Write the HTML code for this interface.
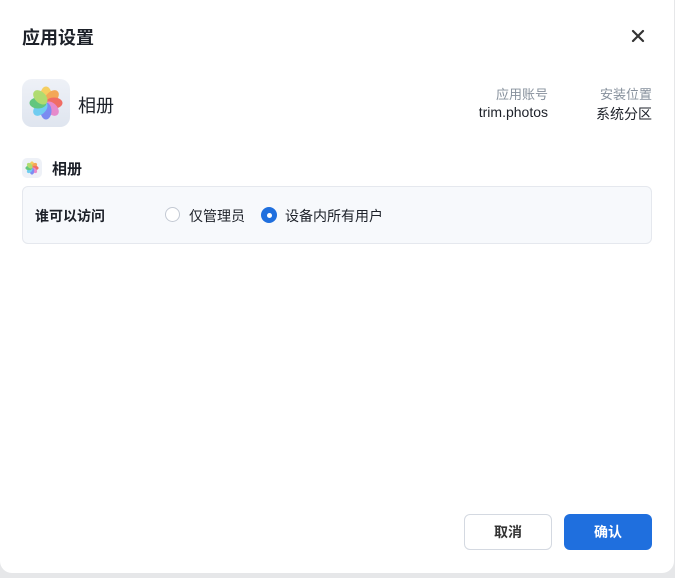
<!DOCTYPE html>
<html><head><meta charset="utf-8"><style>
body{margin:0;width:675px;height:578px;background:#e6e7e9;font-family:"Liberation Sans","Noto Sans CJK SC",sans-serif;position:relative;overflow:hidden}
.dlg{position:absolute;left:0;top:0;width:674px;height:573px;background:#fff;border-radius:0 0 12px 12px}
.t{position:absolute;white-space:nowrap}
.r{position:absolute;white-space:nowrap;text-align:right}
</style></head><body>
<div class="dlg">
<div class="t" style="left:22px;top:24px;font-size:18px;font-weight:bold;color:#1d2129">应用设置</div>
<svg class="t" style="left:631px;top:29px" width="14" height="14" viewBox="0 0 14 14"><path d="M2 2L12 12M12 2L2 12" stroke="#333" stroke-width="2.2" stroke-linecap="round"/></svg>
<div class="t" style="left:22px;top:79px;width:48px;height:48px;border-radius:10px;background:linear-gradient(#eef1f7,#dfe5ef)"></div>
<svg class="t" style="left:26px;top:83px" width="40" height="40" viewBox="-20 -20 40 40">
<g opacity="0.85">
<ellipse cx="0" cy="-8" rx="5.5" ry="8.5" fill="#f7c948"/>
<ellipse cx="0" cy="-8" rx="5.5" ry="8.5" fill="#f59b3c" transform="rotate(45)"/>
<ellipse cx="0" cy="-8" rx="5.5" ry="8.5" fill="#f2584c" transform="rotate(90)"/>
<ellipse cx="0" cy="-8" rx="5.5" ry="8.5" fill="#e77ac5" transform="rotate(135)"/>
<ellipse cx="0" cy="-8" rx="5.5" ry="8.5" fill="#6a7bf2" transform="rotate(180)"/>
<ellipse cx="0" cy="-8" rx="5.5" ry="8.5" fill="#5cc8f0" transform="rotate(225)"/>
<ellipse cx="0" cy="-8" rx="5.5" ry="8.5" fill="#4cc06a" transform="rotate(270)"/>
<ellipse cx="0" cy="-8" rx="5.5" ry="8.5" fill="#a7d95a" transform="rotate(315)"/>
</g></svg>
<div class="t" style="left:78px;top:92px;font-size:18px;color:#1d2129">相册</div>
<div class="r" style="right:126px;top:84px;font-size:13px;color:#86909c">应用账号</div>
<div class="r" style="right:126px;top:104px;font-size:14px;color:#1d2129">trim.photos</div>
<div class="r" style="right:22px;top:84px;font-size:13px;color:#86909c">安装位置</div>
<div class="r" style="right:22px;top:104px;font-size:14px;color:#1d2129">系统分区</div>
<div class="t" style="left:22px;top:158px;width:20px;height:20px;border-radius:5px;background:#eef1f7"></div>
<svg class="t" style="left:24px;top:160px" width="16" height="16" viewBox="-20 -20 40 40">
<g opacity="0.85">
<ellipse cx="0" cy="-8" rx="5.5" ry="8.5" fill="#f7c948"/>
<ellipse cx="0" cy="-8" rx="5.5" ry="8.5" fill="#f59b3c" transform="rotate(45)"/>
<ellipse cx="0" cy="-8" rx="5.5" ry="8.5" fill="#f2584c" transform="rotate(90)"/>
<ellipse cx="0" cy="-8" rx="5.5" ry="8.5" fill="#e77ac5" transform="rotate(135)"/>
<ellipse cx="0" cy="-8" rx="5.5" ry="8.5" fill="#6a7bf2" transform="rotate(180)"/>
<ellipse cx="0" cy="-8" rx="5.5" ry="8.5" fill="#5cc8f0" transform="rotate(225)"/>
<ellipse cx="0" cy="-8" rx="5.5" ry="8.5" fill="#4cc06a" transform="rotate(270)"/>
<ellipse cx="0" cy="-8" rx="5.5" ry="8.5" fill="#a7d95a" transform="rotate(315)"/>
</g></svg>
<div class="t" style="left:52px;top:158px;font-size:15px;font-weight:bold;color:#1d2129">相册</div>
<div class="t" style="left:22px;top:186px;width:628px;height:56px;border:1px solid #e5e8ee;border-radius:6px;background:#f7f9fc"></div>
<div class="t" style="left:35px;top:206px;font-size:14px;font-weight:bold;color:#1d2129">谁可以访问</div>
<div class="t" style="left:165px;top:207px;width:13px;height:13px;border:1.5px solid #c3c9d3;border-radius:50%;background:#fff"></div>
<div class="t" style="left:189px;top:206px;font-size:14px;color:#1d2129">仅管理员</div>
<div class="t" style="left:261px;top:207px;width:16px;height:16px;border-radius:50%;background:#1f6fde"></div>
<div class="t" style="left:266.5px;top:212.5px;width:5px;height:5px;border-radius:50%;background:#fff"></div>
<div class="t" style="left:285px;top:206px;font-size:14px;color:#1d2129">设备内所有用户</div>
<div class="t" style="left:464px;top:514px;width:86px;height:34px;border:1px solid #d4d9e1;border-radius:6px;background:#fff;text-align:center;line-height:34px;font-size:14px;font-weight:bold;color:#333">取消</div>
<div class="t" style="left:564px;top:514px;width:88px;height:36px;border-radius:6px;background:#1f6fde;text-align:center;line-height:36px;font-size:14px;font-weight:bold;color:#fff">确认</div>
</div>
</body></html>
